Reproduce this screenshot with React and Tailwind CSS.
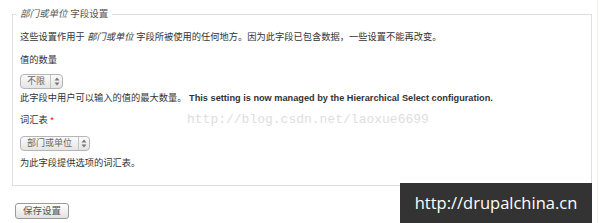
import React from "react";

const cjk = { fontFamily: '"Liberation Sans", "Noto Sans CJK SC", sans-serif' };

function Arrows() {
  return (
    <svg width="6" height="9" viewBox="0 0 6 9" className="block">
      <path d="M3 0.5 L5.5 3.5 L0.5 3.5 Z" fill="#777" />
      <path d="M3 8.5 L5.5 5.5 L0.5 5.5 Z" fill="#777" />
    </svg>
  );
}

function FakeSelect({ label, width, textWidth }) {
  return (
    <div
      className="flex h-[15px] items-center rounded-[4px] border border-[#b5b5b5] bg-gradient-to-b from-[#fbfbfb] to-[#e4e4e4] text-[9px] leading-[13px] text-[#666]"
      style={{ width }}
    >
      <span className="pl-[6px] pr-[4px] text-left" style={{ width: textWidth }}>
        {label}
      </span>
      <span className="h-full border-l border-[#c4c4c4]" />
      <span className="flex flex-1 items-center justify-center">
        <Arrows />
      </span>
    </div>
  );
}

function App() {
  return (
    <div className="relative h-[223px] w-[600px] overflow-hidden bg-white pl-[12px] pt-[8px] text-[#333]" style={cjk}>
      <div className="absolute right-[2px] top-0 h-full w-px bg-[#f1f1e8]" />
      <fieldset className="w-[580px] border border-[#dedede] px-[7px] pb-[16px] pt-[11px]">
        <legend className="-ml-[4px] px-[4px] text-[9.5px] leading-[12px] text-[#555]">
          <em>部门或单位</em> 字段设置
        </legend>
        <p className="text-[9.25px] leading-[12px]">
          这些设置作用于 <em>部门或单位</em> 字段所被使用的任何地方。因为此字段已包含数据，一些设置不能再改变。
        </p>
        <div className="mt-[11px] text-[9.25px] leading-[12px]">值的数量</div>
        <div className="mt-[8px]">
          <FakeSelect label="不限" width="43px" textWidth="29px" />
        </div>
        <p className="mt-[3px] text-[9.25px] leading-[12px]">
          此字段中用户可以输入的值的最大数量。{" "}
          <strong className="text-[9.2px] font-bold text-[#333]">
            This setting is now managed by the Hierarchical Select configuration.
          </strong>
        </p>
        <div className="mt-[10px] text-[9.25px] leading-[12px]">
          词汇表 <span className="text-[#e00]">*</span>
        </div>
        <div className="mt-[10px]">
          <FakeSelect label="部门或单位" width="70px" textWidth="57px" />
        </div>
        <p className="mt-[6px] text-[9.25px] leading-[12px]">为此字段提供选项的词汇表。</p>
      </fieldset>
      <button className="ml-[3px] mt-[17px] flex h-[16px] w-[54px] items-center justify-center rounded-[3px] border border-[#9a9a9a] bg-gradient-to-b from-[#ffffff] to-[#e2e2e2] text-[9.5px] leading-[12px] text-[#555]">
        保存设置
      </button>
      <div
        className="pointer-events-none absolute left-[187px] top-[111px] text-[13px] leading-[18px] text-[#dedede]"
        style={{ fontFamily: '"Liberation Mono", monospace' }}
      >
        http://blog.csdn.net/laoxue6699
      </div>
      <div
        className="absolute left-[400px] top-[183px] flex h-[40px] w-[192px] items-center justify-center bg-[#333333] text-[16.5px] text-white"
        style={{ fontFamily: '"Open Sans", sans-serif' }}
      >
        http://drupalchina.cn
      </div>
    </div>
  );
}

export default App;
